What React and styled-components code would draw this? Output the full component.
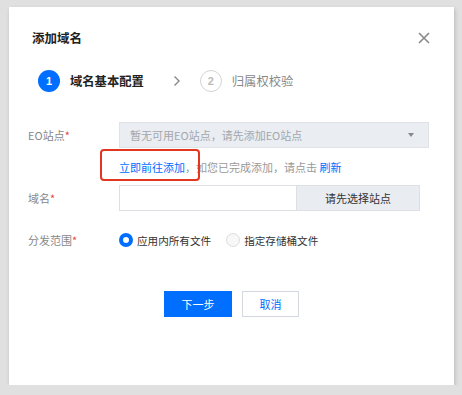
import React from 'react';
import styled, { createGlobalStyle } from 'styled-components';

const GlobalStyle = createGlobalStyle`
  html, body {
    margin: 0;
    padding: 0;
    background: #e0e0e0;
    font-family: "Noto Sans CJK SC", "Liberation Sans", sans-serif;
  }
`;

export default function App() {
  return (
    <>
      <GlobalStyle />
      <Dialog>
        <Header>
          <Title>添加域名</Title>
          <Close aria-label="close">
            <svg width="12" height="12" viewBox="0 0 12 12">
              <path d="M1 1 L11 11 M11 1 L1 11" stroke="#888" strokeWidth="1.6" fill="none" />
            </svg>
          </Close>
        </Header>

        <Steps>
          <Step>
            <StepNum $active>1</StepNum>
            <StepText $active>域名基本配置</StepText>
          </Step>
          <Chevron width="8" height="12" viewBox="0 0 8 12">
            <path d="M1.5 1.5 L6 6 L1.5 10.5" stroke="#888" strokeWidth="1.4" fill="none" />
          </Chevron>
          <Step>
            <StepNum>2</StepNum>
            <StepText>归属权校验</StepText>
          </Step>
        </Steps>

        <Form>
          <Row>
            <Label>
              EO站点<Star>*</Star>
            </Label>
            <Select>
              <span>暂无可用EO站点，请先添加EO站点</span>
              <Caret />
            </Select>
          </Row>
          <Hint>
            <Highlight />
            <Link>立即前往添加</Link>，如您已完成添加，请点击 <Link>刷新</Link>
          </Hint>
          <Row>
            <Label>
              域名<Star>*</Star>
            </Label>
            <InputGroup>
              <Input />
              <Addon>请先选择站点</Addon>
            </InputGroup>
          </Row>
          <Row $top={20}>
            <Label>
              分发范围<Star>*</Star>
            </Label>
            <Radios>
              <RadioItem>
                <Radio $checked />
                应用内所有文件
              </RadioItem>
              <RadioItem>
                <Radio />
                指定存储桶文件
              </RadioItem>
            </Radios>
          </Row>
        </Form>

        <Footer>
          <Button $primary>下一步</Button>
          <Button>取消</Button>
        </Footer>
      </Dialog>
    </>
  );
}

const Dialog = styled.div`
  box-sizing: border-box;
  width: 445px;
  height: 378px;
  margin: 7px 0 0 9px;
  background: #fff;
  box-shadow: 1px 2px 4px rgba(0, 0, 0, 0.18);
`;

const Header = styled.div`
  display: flex;
  justify-content: space-between;
  align-items: center;
  padding: 22px 24px 0 23px;
  height: 18px;
`;

const Title = styled.h2`
  margin: 0;
  font-size: 12.5px;
  line-height: 18px;
  font-weight: 600;
  color: #222;
`;

const Close = styled.span`
  display: flex;
  width: 12px;
  height: 12px;
`;

const Steps = styled.div`
  display: flex;
  align-items: center;
  margin-top: 23px;
  padding-left: 29px;
  height: 22px;
`;

const Step = styled.div`
  display: flex;
  align-items: center;
  gap: 10px;
`;

const StepNum = styled.span`
  box-sizing: border-box;
  width: 22px;
  height: 22px;
  border-radius: 50%;
  display: flex;
  align-items: center;
  justify-content: center;
  font-family: "Liberation Sans", sans-serif;
  font-size: 11px;
  font-weight: 700;
  color: ${(p) => (p.$active ? '#fff' : '#bbb')};
  background: ${(p) => (p.$active ? '#006eff' : '#fff')};
  border: ${(p) => (p.$active ? 'none' : '1.5px solid #d4d4d4')};
`;

const StepText = styled.span`
  font-size: 12.3px;
  font-weight: ${(p) => (p.$active ? 600 : 400)};
  color: ${(p) => (p.$active ? '#222' : '#888')};
`;

const Chevron = styled.svg`
  margin: 0 19px 0 29px;
`;

const Form = styled.div`
  margin-top: 30px;
  padding-left: 19px;
  font-size: 11px;
`;

const Row = styled.div`
  display: flex;
  align-items: center;
  margin-top: ${(p) => (p.$top ? `${p.$top}px` : '0')};
`;

const Label = styled.div`
  width: 91px;
  color: #888;
  font-size: 11px;
`;

const Star = styled.span`
  color: #e54545;
`;

const Select = styled.div`
  box-sizing: border-box;
  width: 310px;
  height: 26px;
  display: flex;
  align-items: center;
  justify-content: space-between;
  padding: 0 12px 0 10px;
  background: #eaedf1;
  border: 1px solid #dfe2e7;
  color: #a3a7ad;
  font-size: 11px;
`;

const Caret = styled.span`
  width: 0;
  height: 0;
  border-left: 3.5px solid transparent;
  border-right: 3.5px solid transparent;
  border-top: 4px solid #888;
  margin-right: 2px;
`;

const Hint = styled.div`
  position: relative;
  margin-left: 91px;
  padding: 10px 0 9px;
  line-height: 18px;
  color: #999;
  font-size: 11px;
`;

const Highlight = styled.span`
  position: absolute;
  left: -19px;
  top: 1px;
  width: 100px;
  height: 32px;
  box-sizing: border-box;
  border: 2.5px solid #e3361f;
  border-radius: 4px;
`;

const Link = styled.span`
  color: #006eff;
`;

const InputGroup = styled.div`
  display: flex;
  height: 26px;
`;

const Input = styled.div`
  box-sizing: border-box;
  width: 177px;
  height: 26px;
  border: 1px solid #dcdfe4;
  border-right: none;
  background: #fff;
`;

const Addon = styled.div`
  box-sizing: border-box;
  width: 124px;
  height: 26px;
  display: flex;
  align-items: center;
  justify-content: center;
  background: #e9ecf0;
  border: 1px solid #dcdfe4;
  color: #333;
  font-size: 11px;
`;

const Radios = styled.div`
  display: flex;
  align-items: center;
  gap: 15px;
  height: 18px;
`;

const RadioItem = styled.label`
  display: flex;
  align-items: center;
  gap: 4px;
  color: #333;
  font-size: 10.6px;
`;

const Radio = styled.span`
  box-sizing: border-box;
  width: 14px;
  height: 14px;
  border-radius: 50%;
  background: ${(p) => (p.$checked ? '#fff' : '#f7f7f7')};
  border: ${(p) => (p.$checked ? '4px solid #006eff' : '1px solid #dcdcdc')};
`;

const Footer = styled.div`
  display: flex;
  justify-content: center;
  gap: 10px;
  margin-top: 42px;
`;

const Button = styled.button`
  box-sizing: border-box;
  width: ${(p) => (p.$primary ? '68px' : '57px')};
  height: 26px;
  padding: 0;
  font-family: inherit;
  font-size: 11px;
  cursor: pointer;
  border: 1px solid ${(p) => (p.$primary ? '#006eff' : '#d5d9df')};
  background: ${(p) => (p.$primary ? '#006eff' : '#fff')};
  color: ${(p) => (p.$primary ? '#fff' : '#006eff')};
`;
